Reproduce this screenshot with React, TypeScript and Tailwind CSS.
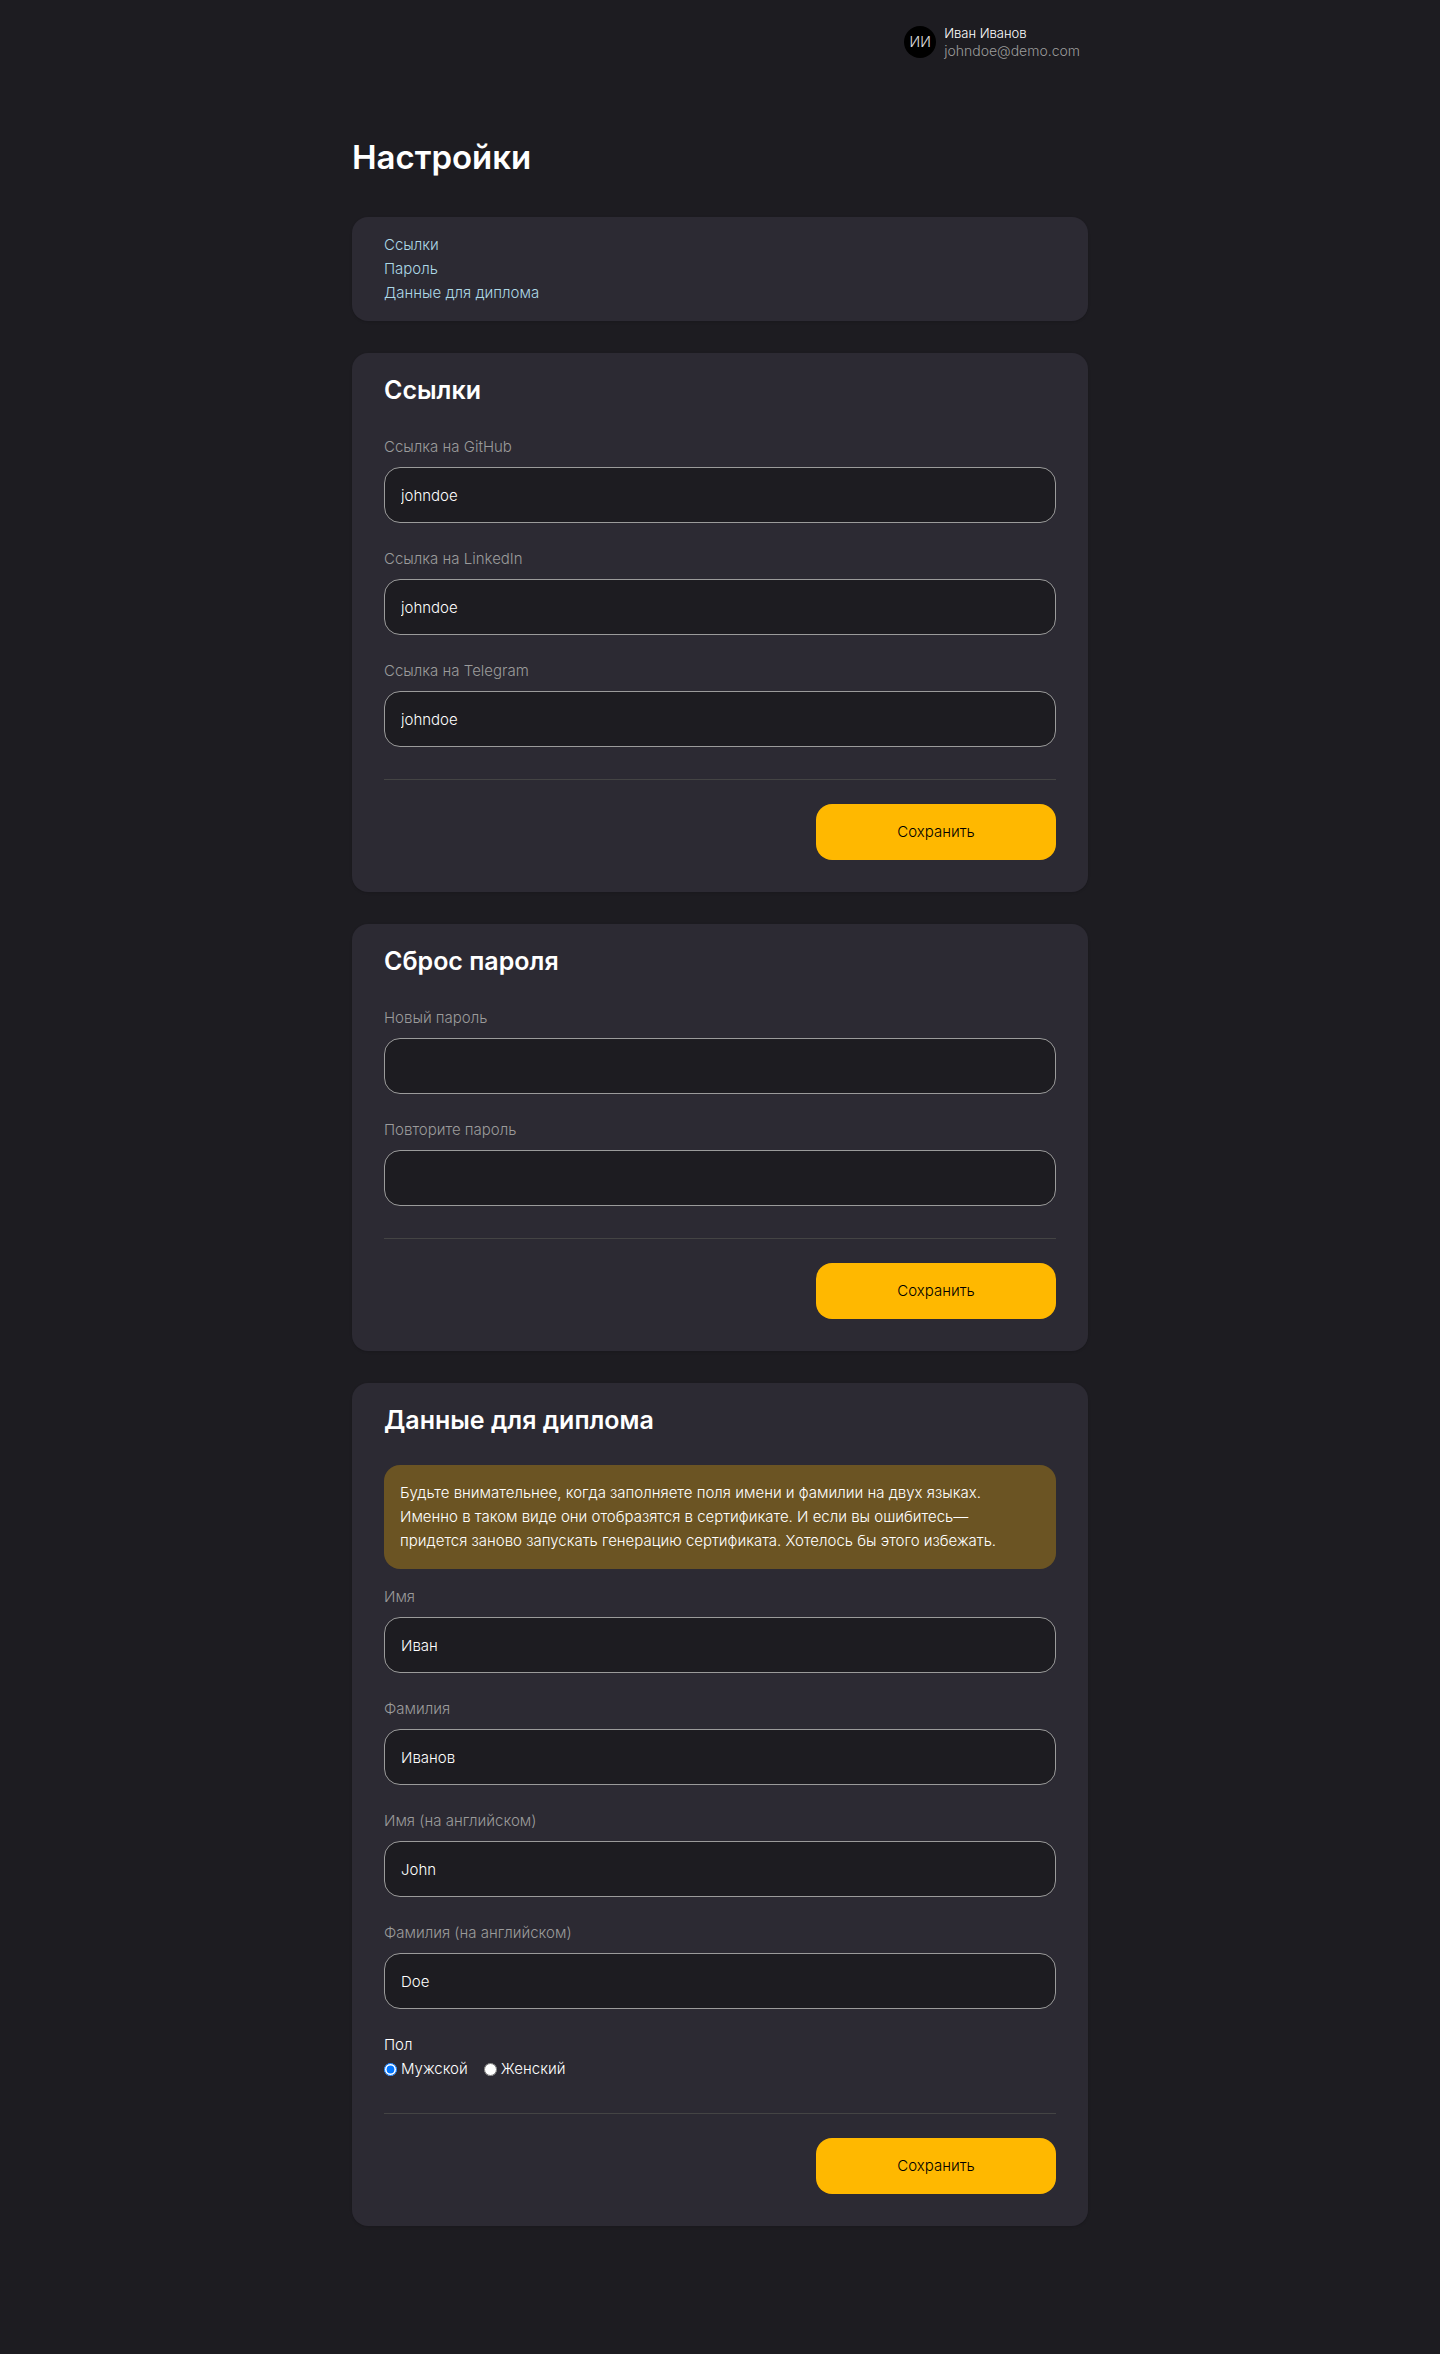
import type { ReactNode } from "react";

function Field({ id, label, value = "", type = "text" }: { id: string; label: string; value?: string; type?: string }) {
  return (
    <div className="mb-6 last:mb-0">
      <label htmlFor={id} className="mb-2 block text-[#9b9b9b]">
        {label}
      </label>
      <input
        id={id}
        type={type}
        defaultValue={value}
        className="block h-14 w-full rounded-2xl border border-[#9b9b9b] bg-[#1d1c21] px-4 text-white outline-none focus:border-[#ffb800]"
      />
    </div>
  );
}

function Card({ id, title, children }: { id: string; title: string; children: ReactNode }) {
  return (
    <section id={id} className="rounded-2xl bg-[#2c2a33] px-8 pt-4 pb-8 shadow-sm">
      <h2 className="mb-6 text-[25px] leading-[42px] font-semibold text-white">{title}</h2>
      <form onSubmit={(e) => e.preventDefault()}>
        {children}
        <hr className="mt-8 mb-6 border-[#444444]" />
        <button
          type="submit"
          className="ml-auto block h-14 w-60 cursor-pointer rounded-2xl bg-[#ffb800] text-black"
        >
          Сохранить
        </button>
      </form>
    </section>
  );
}

const sections = [
  { href: "#links", label: "Ссылки" },
  { href: "#password", label: "Пароль" },
  { href: "#diploma", label: "Данные для диплома" },
];

export default function App() {
  return (
    <div className="min-h-screen bg-[#1d1c21] px-4 pb-32 font-['Inter',sans-serif] text-[15px] leading-6 font-light text-white">
      <div className="mx-auto max-w-[736px]">
        <header className="flex items-center justify-end gap-2 pt-6 pr-2">
          <div className="flex size-8 items-center justify-center rounded-full bg-black text-sm text-[#e0e0e0]">ИИ</div>
          <div>
            <p className="text-[13px] leading-[18px] text-white">Иван Иванов</p>
            <p className="text-sm leading-[18px] text-[#9b9b9b]">johndoe@demo.com</p>
          </div>
        </header>

        <main className="pt-[70px]">
          <h1 className="mb-8 text-[33px] leading-[55px] font-semibold text-white">Настройки</h1>

          <div className="flex flex-col gap-8">
            <nav className="rounded-2xl bg-[#2c2a33] px-8 py-4 shadow-sm">
              <ul>
                {sections.map((s) => (
                  <li key={s.href}>
                    <a href={s.href} className="text-[#add8e6]">
                      {s.label}
                    </a>
                  </li>
                ))}
              </ul>
            </nav>

            <Card id="links" title="Ссылки">
              <Field id="github" label="Ссылка на GitHub" value="johndoe" />
              <Field id="linkedin" label="Ссылка на LinkedIn" value="johndoe" />
              <Field id="telegram" label="Ссылка на Telegram" value="johndoe" />
            </Card>

            <Card id="password" title="Сброс пароля">
              <Field id="new-password" label="Новый пароль" type="password" />
              <Field id="repeat-password" label="Повторите пароль" type="password" />
            </Card>

            <Card id="diploma" title="Данные для диплома">
              <p className="mb-4 rounded-2xl bg-[#6b5423] p-4 text-white">
                Будьте внимательнее, когда заполняете поля имени и фамилии на двух языках. Именно в таком виде они
                отобразятся в сертификате. И если вы ошибитесь— придется&nbsp;заново запускать генерацию сертификата.
                Хотелось бы этого избежать.
              </p>
              <Field id="first-name" label="Имя" value="Иван" />
              <Field id="last-name" label="Фамилия" value="Иванов" />
              <Field id="first-name-en" label="Имя (на английском)" value="John" />
              <Field id="last-name-en" label="Фамилия (на английском)" value="Doe" />
              <fieldset>
                <legend>Пол</legend>
                <div className="flex gap-4">
                  <label className="flex items-center gap-1">
                    <input type="radio" name="gender" value="male" defaultChecked className="size-[13px]" />
                    Мужской
                  </label>
                  <label className="flex items-center gap-1">
                    <input type="radio" name="gender" value="female" className="size-[13px]" />
                    Женский
                  </label>
                </div>
              </fieldset>
            </Card>
          </div>
        </main>
      </div>
    </div>
  );
}
